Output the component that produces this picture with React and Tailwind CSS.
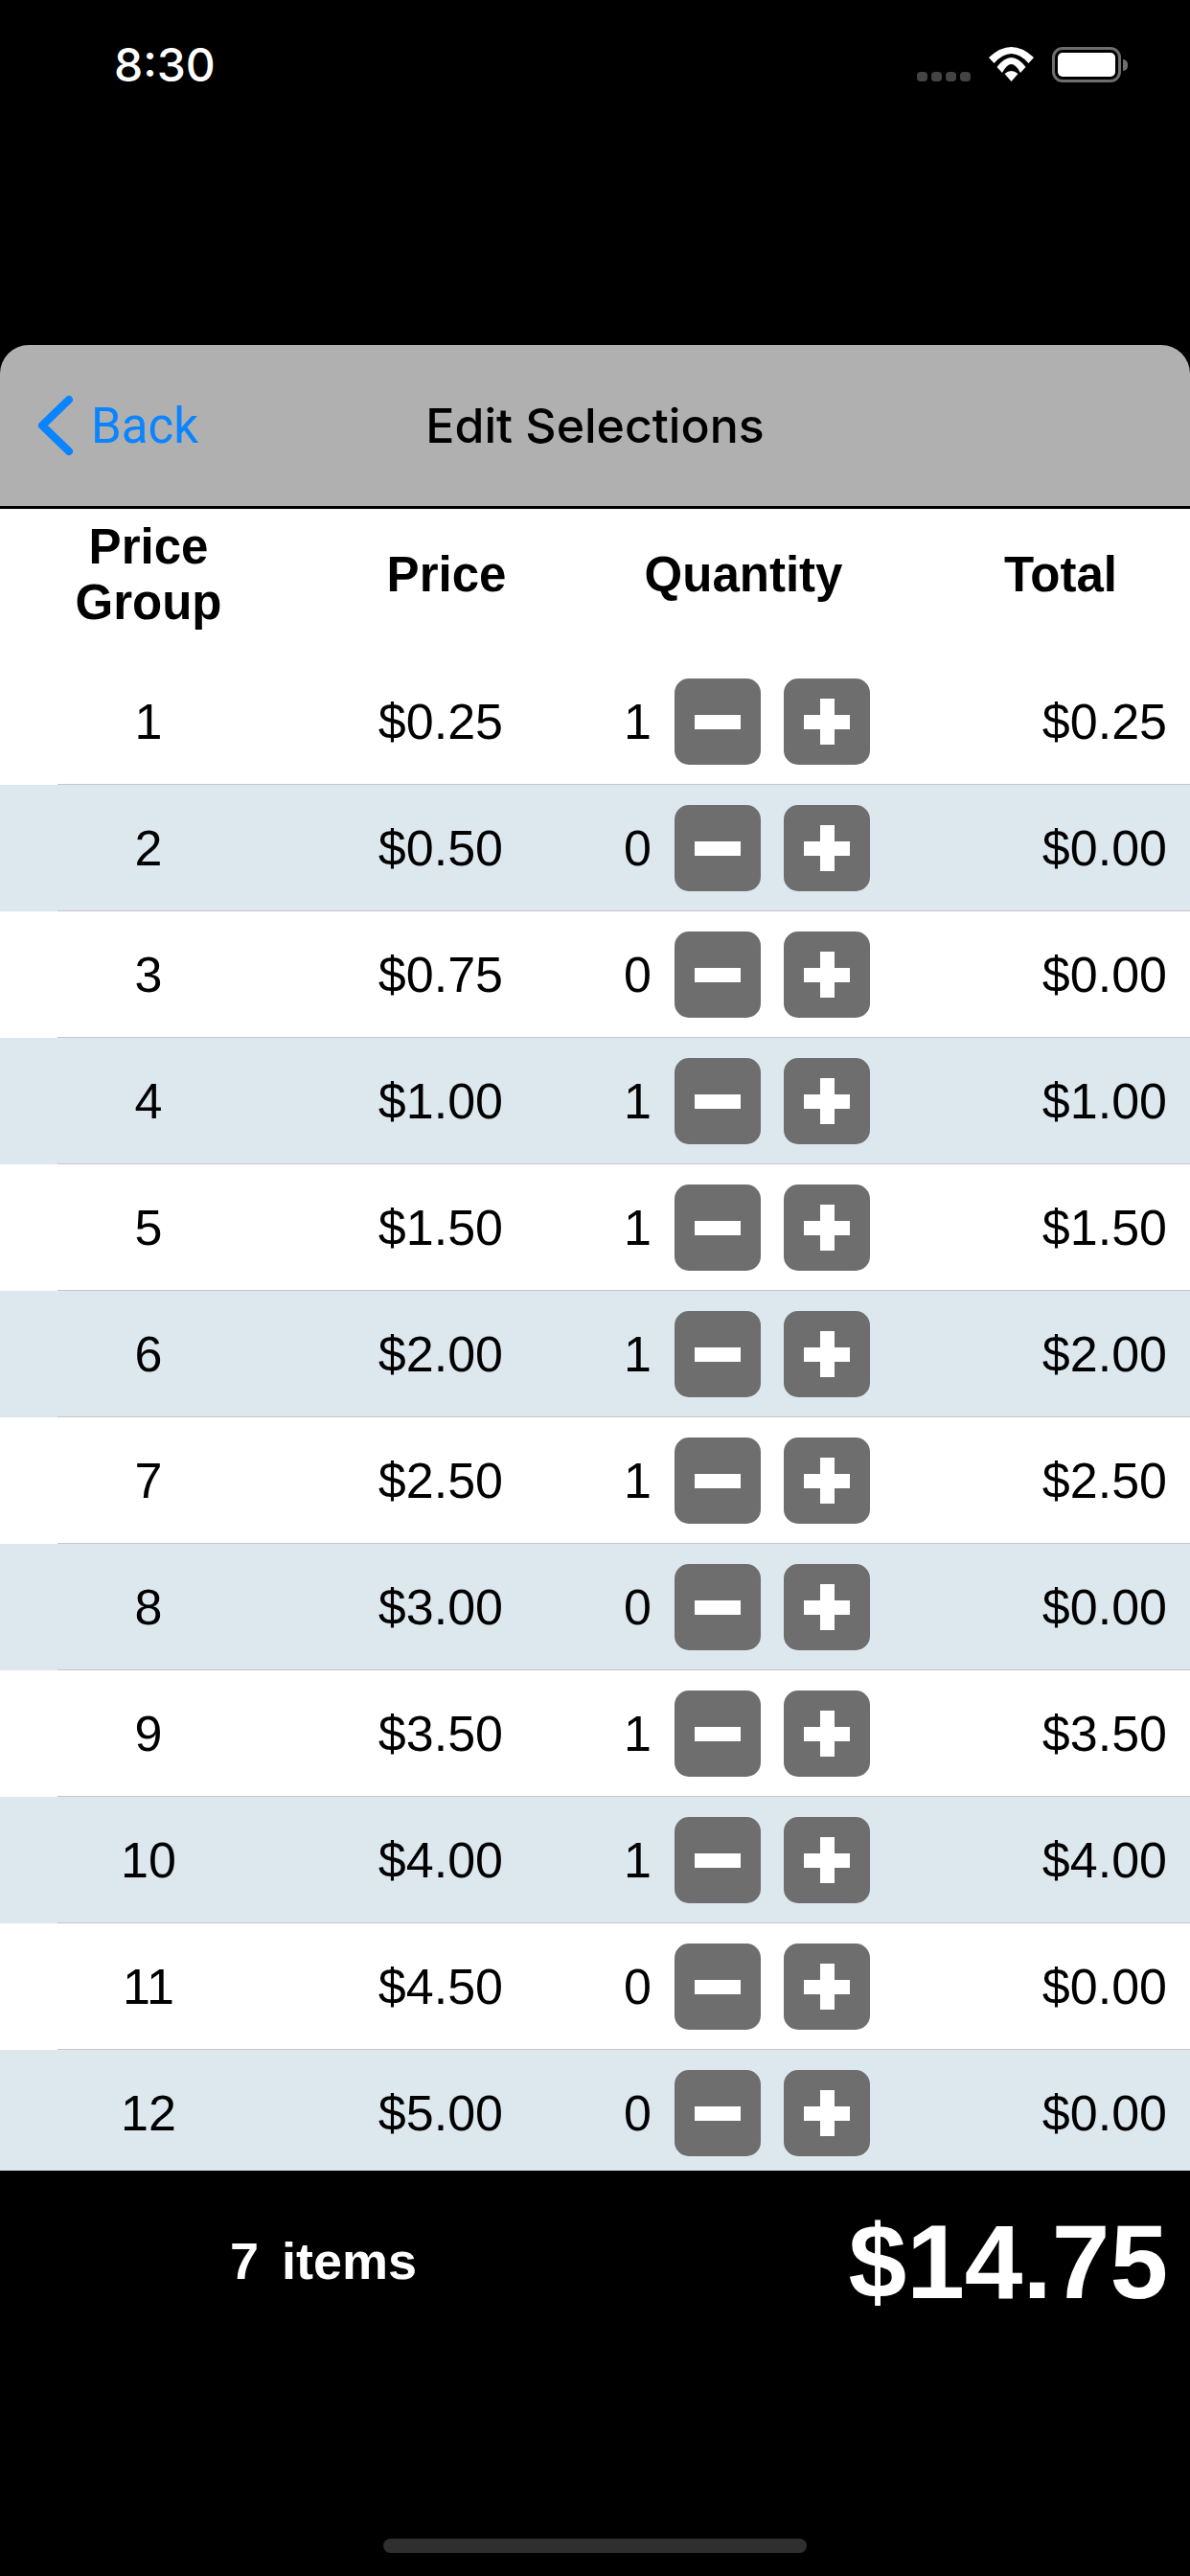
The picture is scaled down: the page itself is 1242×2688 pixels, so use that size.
const rows = [
  { group: 1, price: '$0.25', qty: 1, total: '$0.25' },
  { group: 2, price: '$0.50', qty: 0, total: '$0.00' },
  { group: 3, price: '$0.75', qty: 0, total: '$0.00' },
  { group: 4, price: '$1.00', qty: 1, total: '$1.00' },
  { group: 5, price: '$1.50', qty: 1, total: '$1.50' },
  { group: 6, price: '$2.00', qty: 1, total: '$2.00' },
  { group: 7, price: '$2.50', qty: 1, total: '$2.50' },
  { group: 8, price: '$3.00', qty: 0, total: '$0.00' },
  { group: 9, price: '$3.50', qty: 1, total: '$3.50' },
  { group: 10, price: '$4.00', qty: 1, total: '$4.00' },
  { group: 11, price: '$4.50', qty: 0, total: '$0.00' },
  { group: 12, price: '$5.00', qty: 0, total: '$0.00' },
];

const StatusBar = () => (
  <div className="h-[360px] flex items-start justify-between pt-[44px] pl-[119px] pr-[65px]">
    <span className="text-white text-[48px] leading-[48px] font-medium font-['Inter',sans-serif]">8:30</span>
    <div className="flex items-start mt-[5px]">
      <div className="flex gap-[4px] mt-[26px] mr-[19px]">
        <div className="w-[11px] h-[10px] rounded-[4px] bg-[#444444]" />
        <div className="w-[11px] h-[10px] rounded-[4px] bg-[#444444]" />
        <div className="w-[11px] h-[10px] rounded-[4px] bg-[#444444]" />
        <div className="w-[11px] h-[10px] rounded-[4px] bg-[#444444]" />
      </div>
      <svg width="47" height="36" viewBox="0 0 47 36" className="mr-[19px]">
        <path d="M23.5 36 L16.5 28 Q23.5 22 30.5 28 Z" fill="#fff" />
        <path d="M8.5 21 Q23.5 1 38.5 21 L33 27 Q23.5 9 14 27 Z" fill="#fff" />
        <path d="M0 11 Q23.5 -11 47 11 L41.5 17 Q23.5 -3 5.5 17 Z" fill="#fff" />
      </svg>
      <div className="flex items-center">
        <div className="w-[72px] h-[37px] rounded-[11px] border-[3px] border-[#6e6e6e] p-[3px]">
          <div className="w-full h-full rounded-[5px] bg-white" />
        </div>
        <div className="w-[5px] h-[12px] rounded-r-full bg-[#6e6e6e] ml-[2px]" />
      </div>
    </div>
  </div>
);

const NavBar = () => (
  <div className="h-[171px] bg-[#b0b0b0] rounded-t-[30px] border-b-[3px] border-black grid grid-cols-[1fr_auto_1fr] items-center">
    <div className="flex items-center pl-[39px] gap-[18px]">
      <svg width="38" height="64" viewBox="0 0 38 64" fill="none">
        <path d="M33 5 L5 32 L33 59" stroke="#0a84ff" strokeWidth="8" strokeLinecap="round" strokeLinejoin="round" />
      </svg>
      <span className="text-[#0a84ff] text-[51px] leading-none font-['Roboto',sans-serif]">Back</span>
    </div>
    <span className="text-black text-[50px] leading-none font-medium font-['Inter',sans-serif]">Edit Selections</span>
    <div />
  </div>
);

const TableHeader = () => (
  <div className="h-[156px] pb-[18px] bg-white flex items-center text-black text-[51px] leading-[58px] font-bold text-center">
    <div className="w-[310px]">Price<br />Group</div>
    <div className="w-[312px]">Price</div>
    <div className="w-[308px]">Quantity</div>
    <div className="flex-1 pl-[42px]">Total</div>
  </div>
);

const StepButton = ({ plus }) => (
  <div className="w-[90px] h-[90px] rounded-[15px] bg-[#6e6e6e] relative">
    <div className="absolute left-[21px] top-[38px] w-[48px] h-[15px] bg-white" />
    {plus && <div className="absolute left-[38px] top-[21px] w-[15px] h-[48px] bg-white" />}
  </div>
);

const Row = ({ row, index }) => (
  <div className={`h-[132px] shrink-0 relative flex items-center text-black text-[52px] leading-none ${index % 2 === 1 ? 'bg-[#dde8ee]' : 'bg-white'}`}>
    <div className="w-[310px] text-center">{row.group}</div>
    <div className="w-[215px] text-right">{row.price}</div>
    <div className="w-[155px] text-right">{row.qty}</div>
    <div className="flex gap-[24px] ml-[24px]">
      <StepButton />
      <StepButton plus />
    </div>
    <div className="flex-1 text-right pr-[24px]">{row.total}</div>
    <div className="absolute left-[60px] right-0 bottom-0 h-[1px] bg-[#c6c6c8]" />
  </div>
);

export default function App() {
  return (
    <div className="w-[1242px] h-[2688px] bg-black flex flex-col font-['Liberation_Sans',sans-serif] overflow-hidden">
      <StatusBar />
      <NavBar />
      <TableHeader />
      <div className="h-[1578px] overflow-hidden flex flex-col">
        {rows.map((row, index) => (
          <Row key={row.group} row={row} index={index} />
        ))}
      </div>
      <div className="flex items-start text-white font-bold pt-[41px]">
        <span className="w-[660px] pl-[240px] mt-[26px] text-[54px] leading-none whitespace-pre [word-spacing:-3px]">7  items</span>
        <span className="flex-1 text-right pr-[23px] text-[109px] leading-none">$14.75</span>
      </div>
      <div className="mt-auto mb-[24px] mx-auto w-[442px] h-[15px] rounded-full bg-[#2f2f2f]" />
    </div>
  );
}
